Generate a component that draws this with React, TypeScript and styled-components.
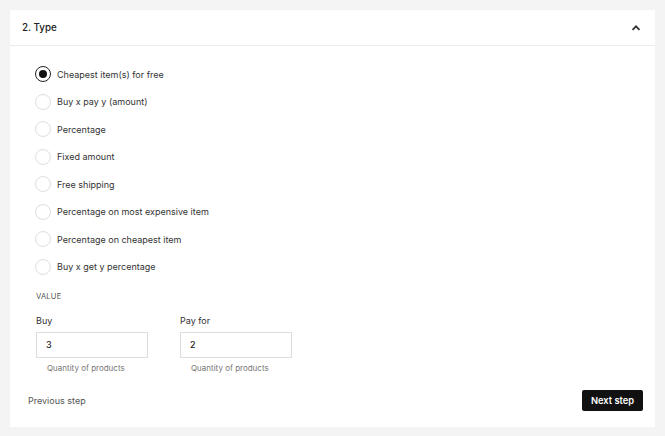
import styled, { createGlobalStyle } from 'styled-components';

const Global = createGlobalStyle`
  html, body { margin: 0; padding: 0; background: #f4f4f4; }
  body { font-family: Inter, "Noto Sans", sans-serif; color: #1a1a1a; }
  * { box-sizing: border-box; }
`;

const Page = styled.div`
  padding: 10px;
`;

const Card = styled.section`
  background: #fff;
  width: 645px;
`;

const Header = styled.div`
  height: 36px;
  display: flex;
  align-items: center;
  justify-content: space-between;
  padding: 0 14px 0 12px;
  border-bottom: 1px solid #ececec;
`;

const Title = styled.h2`
  margin: 0;
  font-size: 9.8px;
  font-weight: 500;
  color: #222;
`;

const Body = styled.div`
  padding: 20px 12px 16px 18px;
`;

const Options = styled.div`
  display: flex;
  flex-direction: column;
  gap: 11.5px;
  padding-left: 7px;
`;

const Option = styled.label`
  display: flex;
  align-items: center;
  gap: 6px;
  height: 16px;
  font-size: 9px;
  color: #333;
`;

const Dot = styled.span<{ $on?: boolean }>`
  width: 16px;
  height: 16px;
  border-radius: 50%;
  border: 1px solid ${p => (p.$on ? '#222' : '#dedede')};
  display: flex;
  align-items: center;
  justify-content: center;
  &::after {
    content: '';
    width: 8px;
    height: 8px;
    border-radius: 50%;
    background: ${p => (p.$on ? '#111' : 'transparent')};
  }
`;

const Section = styled.div`
  padding-left: 8px;
  margin-top: 17px;
`;

const Caps = styled.div`
  font-size: 7.6px;
  color: #555;
  letter-spacing: 0.2px;
`;

const Fields = styled.div`
  display: flex;
  gap: 32px;
  margin-top: 14px;
`;

const Field = styled.div`
  display: flex;
  flex-direction: column;
  width: 112px;
`;

const Label = styled.span`
  font-size: 9px;
  color: #333;
  margin-bottom: 6px;
`;

const Input = styled.div`
  height: 26px;
  border: 1px solid #dcdcdc;
  display: flex;
  align-items: center;
  padding-left: 9px;
  font-size: 9px;
  font-weight: 500;
  color: #222;
`;

const Help = styled.span`
  font-size: 8px;
  color: #777;
  margin-top: 5px;
  padding-left: 11px;
`;

const Footer = styled.div`
  display: flex;
  align-items: center;
  justify-content: space-between;
  margin-top: 17px;
`;

const Back = styled.span`
  font-size: 9px;
  color: #555;
`;

const Next = styled.button`
  height: 21px;
  padding: 0 9px;
  border: none;
  border-radius: 2px;
  background: #111;
  color: #fff;
  font-family: inherit;
  font-size: 9.3px;
  font-weight: 600;
`;

const types = [
  'Cheapest item(s) for free',
  'Buy x pay y (amount)',
  'Percentage',
  'Fixed amount',
  'Free shipping',
  'Percentage on most expensive item',
  'Percentage on cheapest item',
  'Buy x get y percentage',
];

export default function App() {
  return (
    <Page>
      <Global />
      <Card>
        <Header>
          <Title>2. Type</Title>
          <svg width="10" height="10" viewBox="0 0 10 10">
            <path d="M1.5 6.8 L5 3.3 L8.5 6.8" fill="none" stroke="#333" strokeWidth="1.8" />
          </svg>
        </Header>
        <Body>
          <Options>
            {types.map((t, i) => (
              <Option key={t}>
                <Dot $on={i === 0} />
                {t}
              </Option>
            ))}
          </Options>
          <Section>
            <Caps>VALUE</Caps>
            <Fields>
              <Field>
                <Label>Buy</Label>
                <Input>3</Input>
                <Help>Quantity of products</Help>
              </Field>
              <Field>
                <Label>Pay for</Label>
                <Input>2</Input>
                <Help>Quantity of products</Help>
              </Field>
            </Fields>
          </Section>
          <Footer>
            <Back>Previous step</Back>
            <Next>Next step</Next>
          </Footer>
        </Body>
      </Card>
    </Page>
  );
}
